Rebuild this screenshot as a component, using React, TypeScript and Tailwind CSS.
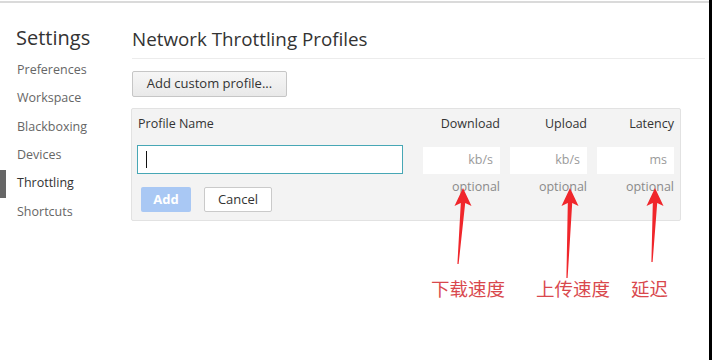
import React from "react";

const font = { fontFamily: '"Open Sans", "Noto Sans", sans-serif' };

const navItems = [
  "Preferences",
  "Workspace",
  "Blackboxing",
  "Devices",
  "Throttling",
  "Shortcuts",
];

function Arrow({ tx, bx, by }: { tx: number; bx: number; by: number }) {
  const pts = [
    [tx, 188],
    [tx - 8.5, 206],
    [tx - 2.2, 203],
    [bx - 0.6, by],
    [bx + 0.6, by],
    [tx + 2.2, 203],
    [tx + 8.5, 206],
  ]
    .map((p) => p.join(","))
    .join(" ");
  return <polygon points={pts} fill="#f0262b" />;
}

function NumCol({ label, unit }: { label: string; unit: string }) {
  return (
    <div className="flex w-[77px] flex-col items-end">
      <div className="flex h-[28px] items-center text-[12.5px] text-[#333]">
        {label}
      </div>
      <div className="mt-[8px] flex h-[27px] w-full items-center justify-end bg-white pr-[7px] text-[12.5px] text-[#9a9a9a]">
        {unit}
      </div>
      <div className="mt-[4px] flex h-[20px] items-center text-[12.5px] text-[#8a8a8a]">
        optional
      </div>
    </div>
  );
}

export default function App() {
  return (
    <div
      className="relative flex h-[360px] w-[712px] overflow-hidden bg-white"
      style={font}
    >
      <div className="flex flex-1 flex-col">
        <div className="mt-px h-[2px] w-full bg-[#dadada]" />
        <div className="flex flex-1">
          {/* sidebar */}
          <div className="w-[132px] pt-[21px]">
            <div className="h-[28px] pl-[16px] text-[20px] leading-[28px] text-[#333]">
              Settings
            </div>
            <div className="mt-[4px]">
              {navItems.map((n) => (
                <div key={n} className="flex h-[28.4px] items-center">
                  <div
                    className={
                      n === "Throttling"
                        ? "h-full w-[6px] bg-[#666]"
                        : "h-full w-[6px]"
                    }
                  />
                  <span
                    className={
                      n === "Throttling"
                        ? "pl-[11px] text-[12.5px] text-[#333]"
                        : "pl-[11px] text-[12.5px] text-[#666]"
                    }
                  >
                    {n}
                  </span>
                </div>
              ))}
            </div>
          </div>

          {/* main */}
          <div className="flex flex-1 flex-col pt-[22px]">
            <div className="h-[28px] text-[18.8px] leading-[28px] text-[#333]">
              Network Throttling Profiles
            </div>
            <div className="mt-[5px] mr-[4px] h-px bg-[#ececec]" />
            <div className="mt-[11px]">
              <button className="h-[26px] w-[155px] rounded-[2px] border border-[#c6c6c6] bg-gradient-to-b from-[#f6f6f6] to-[#e9e9e9] text-[13px] text-[#333]">
                Add custom profile...
              </button>
            </div>
            <div className="mt-[11px] ml-[-1px] flex w-[550px] rounded-[2px] border border-[#e2e2e2] bg-[#f3f3f3] pt-[2px] pr-[6px] pb-[8px] pl-[5px]">
              <div className="flex w-[267px] flex-col">
                <div className="flex h-[28px] items-center pl-[1px] text-[12.5px] text-[#333]">
                  Profile Name
                </div>
                <div className="mt-[6px] flex h-[29px] items-center border border-[#47a7b5] bg-white pl-[8px]">
                  <div className="h-[17px] w-px bg-[#111]" />
                </div>
                <div className="mt-[13px] flex gap-[13px] pl-[4px]">
                  <button className="h-[25px] w-[50px] rounded-[2px] bg-[#a9c8f4] text-[13px] font-bold text-white">
                    Add
                  </button>
                  <button className="h-[25px] w-[68px] rounded-[2px] border border-[#cacaca] bg-white text-[13px] text-[#333]">
                    Cancel
                  </button>
                </div>
              </div>
              <div className="ml-[20px] flex gap-[10px]">
                <NumCol label="Download" unit="kb/s" />
                <NumCol label="Upload" unit="kb/s" />
                <NumCol label="Latency" unit="ms" />
              </div>
            </div>
          </div>
        </div>
      </div>
      <div className="w-[3px] bg-black" />

      {/* annotations */}
      <svg
        className="pointer-events-none absolute inset-0"
        width={712}
        height={360}
      >
        <Arrow tx={463} bx={458} by={264} />
        <Arrow tx={570} bx={567} by={278} />
        <Arrow tx={655} bx={652} by={262} />
      </svg>
      <span
        className="absolute top-[276px] left-[431px] text-[18.5px] leading-[24px] text-[#d9484d]"
        style={{ fontFamily: '"Noto Sans CJK SC", sans-serif' }}
      >
        下载速度
      </span>
      <span
        className="absolute top-[276px] left-[536px] text-[18.5px] leading-[24px] text-[#d9484d]"
        style={{ fontFamily: '"Noto Sans CJK SC", sans-serif' }}
      >
        上传速度
      </span>
      <span
        className="absolute top-[276px] left-[631px] text-[18.5px] leading-[24px] text-[#d9484d]"
        style={{ fontFamily: '"Noto Sans CJK SC", sans-serif' }}
      >
        延迟
      </span>
    </div>
  );
}
